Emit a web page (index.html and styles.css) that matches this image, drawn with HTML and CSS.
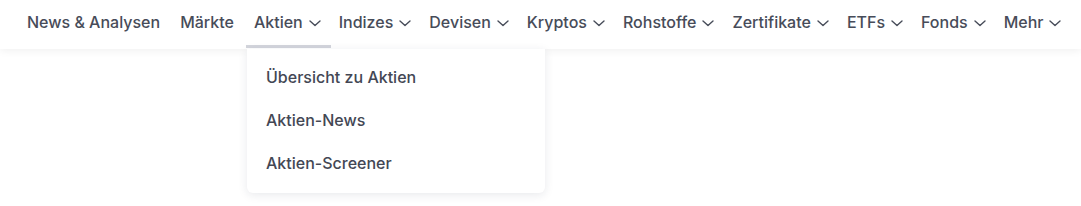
FILE: index.html
```html
<!DOCTYPE html>
<html lang="de">
<head>
<meta charset="utf-8">
<link rel="stylesheet" href="styles.css">
</head>
<body>
<header class="header">
  <nav class="nav">
    <ul class="menu">
      <li class="item plain"><span class="label">News &amp; Analysen</span></li>
      <li class="item plain"><span class="label">Märkte</span></li>
      <li class="item active"><span class="label">Aktien</span><svg class="chev" viewBox="0 0 14 8"><path d="M2 2l5 4.5 5-4.5"/></svg></li>
      <li class="item"><span class="label">Indizes</span><svg class="chev" viewBox="0 0 14 8"><path d="M2 2l5 4.5 5-4.5"/></svg></li>
      <li class="item"><span class="label">Devisen</span><svg class="chev" viewBox="0 0 14 8"><path d="M2 2l5 4.5 5-4.5"/></svg></li>
      <li class="item"><span class="label">Kryptos</span><svg class="chev" viewBox="0 0 14 8"><path d="M2 2l5 4.5 5-4.5"/></svg></li>
      <li class="item"><span class="label">Rohstoffe</span><svg class="chev" viewBox="0 0 14 8"><path d="M2 2l5 4.5 5-4.5"/></svg></li>
      <li class="item"><span class="label">Zertifikate</span><svg class="chev" viewBox="0 0 14 8"><path d="M2 2l5 4.5 5-4.5"/></svg></li>
      <li class="item"><span class="label">ETFs</span><svg class="chev" viewBox="0 0 14 8"><path d="M2 2l5 4.5 5-4.5"/></svg></li>
      <li class="item"><span class="label">Fonds</span><svg class="chev" viewBox="0 0 14 8"><path d="M2 2l5 4.5 5-4.5"/></svg></li>
      <li class="item"><span class="label">Mehr</span><svg class="chev" viewBox="0 0 14 8"><path d="M2 2l5 4.5 5-4.5"/></svg></li>
    </ul>
  </nav>
  <div class="dropdown">
    <div class="dd-item">Übersicht zu Aktien</div>
    <div class="dd-item">Aktien-News</div>
    <div class="dd-item">Aktien-Screener</div>
  </div>
</header>
</body>
</html>
```

FILE: styles.css
```css
html, body {
  margin: 0;
  padding: 0;
  background: #ffffff;
  font-family: Inter, "Noto Sans", sans-serif;
  color: #474c59;
}
.header {
  position: relative;
  height: 206px;
}
.nav {
  height: 49px;
  background: #fff;
  box-shadow: 0 2px 8px rgba(0, 0, 0, 0.06);
  position: relative;
}
.menu {
  list-style: none;
  margin: 0;
  padding: 0 0 0 19px;
  display: flex;
  height: 49px;
  gap: 0;
}
.item {
  position: relative;
  display: flex;
  align-items: center;
  gap: 5px;
  padding: 0 9px 5px 8px;
  height: 49px;
  box-sizing: border-box;
  font-size: 16px;
  font-weight: 500;
  white-space: nowrap;
}
.item.plain {
  padding-right: 12px;
}
.chev {
  width: 14px;
  height: 8px;
  fill: none;
  stroke: #474c59;
  stroke-width: 1.4;
  stroke-linecap: round;
  stroke-linejoin: round;
  margin-top: 2px;
}
.active::after {
  content: "";
  position: absolute;
  left: 0;
  right: 0;
  bottom: 1px;
  height: 3px;
  background: #d3d5dc;
}
.dropdown {
  position: absolute;
  top: 49px;
  left: 247px;
  width: 298px;
  box-sizing: border-box;
  padding: 7px 0 8px;
  background: #fff;
  border-radius: 0 0 6px 6px;
  box-shadow: 0 2px 10px rgba(30, 40, 70, 0.1);
  z-index: 2;
}
.dd-item {
  height: 43px;
  line-height: 43px;
  padding: 0 19px;
  font-size: 16px;
  font-weight: 500;
  color: #434754;
}
```
